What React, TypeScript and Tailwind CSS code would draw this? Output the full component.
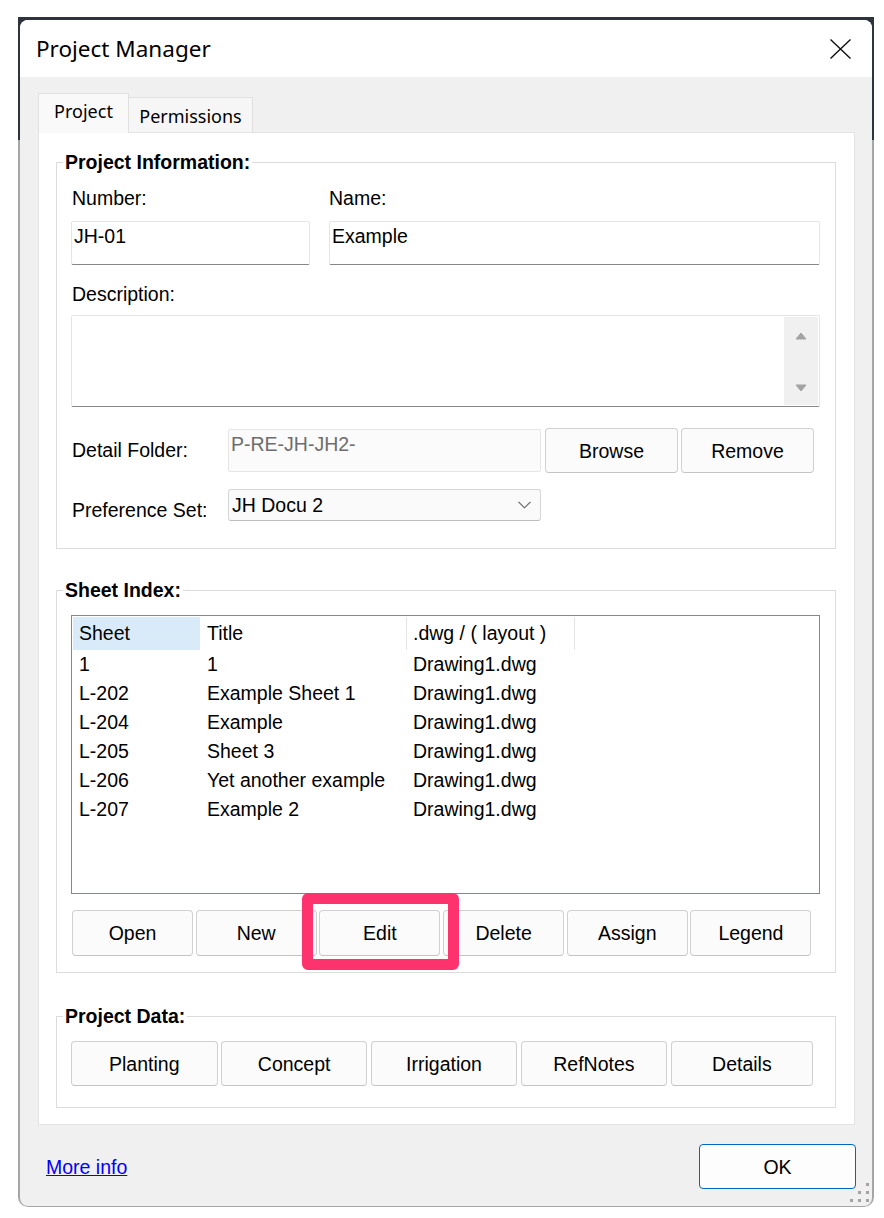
const sheets = [
  ["1", "1", "Drawing1.dwg"],
  ["L-202", "Example Sheet 1", "Drawing1.dwg"],
  ["L-204", "Example", "Drawing1.dwg"],
  ["L-205", "Sheet 3", "Drawing1.dwg"],
  ["L-206", "Yet another example", "Drawing1.dwg"],
  ["L-207", "Example 2", "Drawing1.dwg"],
];

const sheetButtons = ["Open", "New", "Edit", "Delete", "Assign", "Legend"];
const dataButtons = ["Planting", "Concept", "Irrigation", "RefNotes", "Details"];

function Group({
  title,
  className,
  children,
}: {
  title: string;
  className: string;
  children: React.ReactNode;
}) {
  return (
    <fieldset className={`border border-[#dcdcdc] pl-[6px] pr-[8px] ${className}`}>
      <legend className="px-[2px] text-[19.5px] leading-[22px] font-bold text-black">{title}</legend>
      <div className="pl-[8px] pr-[7px]">{children}</div>
    </fieldset>
  );
}

function Button({ label, className }: { label: string; className: string }) {
  return (
    <button
      className={`flex items-center justify-center rounded-[4px] border border-[#d0d0d0] border-b-[#c4c4c4] bg-[#fbfbfb] text-[19.5px] leading-[22px] text-black ${className}`}
    >
      {label}
    </button>
  );
}

export default function App() {
  return (
    <div className="h-[1218px] w-[884px] overflow-hidden bg-white font-['Liberation_Sans',Arial,sans-serif] text-black">
      {/* dark desktop behind the top of the window, grey frame below */}
      <div className="ml-[18px] mt-[17px] w-[856px] rounded-b-[10px] bg-[linear-gradient(to_bottom,#2f343c_0px,#2f343c_123px,#a6a6a6_123px)] px-[2px] pb-px pt-[3px]">
        <div className="relative overflow-hidden rounded-[8px] bg-[#f0f0f0]">
          {/* ── Title bar ── */}
          <div className="flex h-[57px] items-center justify-between bg-white pl-[16px] pr-[21px]">
            <span className="font-['Noto_Sans',sans-serif] text-[22.5px] leading-[30px]">Project Manager</span>
            <svg width="21" height="20" viewBox="0 0 21 20" fill="none" stroke="#111" strokeWidth="1.4">
              <path d="M0.5 0.5L20.5 19.5M20.5 0.5L0.5 19.5" />
            </svg>
          </div>

          {/* ── Tabs + panel ── */}
          <div className="pl-[18px] pr-[17px] pt-[16px]">
            <div className="flex h-[39px] items-end font-['Noto_Sans',sans-serif] text-[18px] leading-[24px]">
              <div className="relative z-10 -mb-px h-[40px] w-[91px] border border-b-0 border-[#e0e0e0] bg-[#f9f9f9] pt-[5px] text-center">
                Project
              </div>
              <div className="h-[35px] w-[124px] border border-b-0 border-l-0 border-[#e0e0e0] bg-[#f6f6f6] pt-[6px] text-center">
                Permissions
              </div>
            </div>

            <div className="border border-[#e3e3e3] bg-white pb-[16px] pl-[17px] pr-[18px] pt-[18px]">
              {/* Project Information */}
              <Group title="Project Information:" className="pb-[27px] pt-[14px]">
                <div className="flex gap-[19px] text-[19.5px] leading-[22px]">
                  <div className="w-[239px]">
                    <div className="pl-px">Number:</div>
                    <div className="mt-[12px] h-[44px] rounded-[2px] border border-[#e5e5e5] border-b-[#868686] bg-white pl-[2px] pt-[3px]">
                      JH-01
                    </div>
                  </div>
                  <div className="flex-1">
                    <div>Name:</div>
                    <div className="mt-[12px] h-[44px] rounded-[2px] border border-[#e5e5e5] border-b-[#868686] bg-white pl-[2px] pt-[3px]">
                      Example
                    </div>
                  </div>
                </div>

                <div className="mt-[18px] pl-px text-[19.5px] leading-[22px]">Description:</div>
                <div className="mt-[10px] flex h-[92px] rounded-[2px] border border-[#e5e5e5] border-b-[#868686] bg-white">
                  <div className="flex-1" />
                  <div className="my-px mr-px flex w-[34px] flex-col items-center justify-between bg-[#f0f0f0] pb-[13px] pt-[15px]">
                    <svg width="12" height="8" viewBox="0 0 12 8">
                      <path d="M6 1L11 7H1Z" fill="#a3a3a3" stroke="#a3a3a3" strokeLinejoin="round" />
                    </svg>
                    <svg width="12" height="8" viewBox="0 0 12 8">
                      <path d="M6 7L11 1H1Z" fill="#a3a3a3" stroke="#a3a3a3" strokeLinejoin="round" />
                    </svg>
                  </div>
                </div>

                <div className="mt-[21px] flex items-start text-[19.5px] leading-[22px]">
                  <div className="mt-[11px] w-[157px] pl-px">Detail Folder:</div>
                  <div className="mt-px h-[43px] w-[313px] rounded-[2px] border border-[#e5e5e5] bg-[#fbfbfb] pl-[2px] pt-[3px] text-[#6d6d6d]">
                    P-RE-JH-JH2-
                  </div>
                  <Button label="Browse" className="ml-[4px] h-[45px] w-[133px]" />
                  <Button label="Remove" className="ml-[3px] h-[45px] w-[133px]" />
                </div>

                <div className="mt-[16px] flex items-start text-[19.5px] leading-[22px]">
                  <div className="mt-[10px] w-[157px] pl-px">Preference Set:</div>
                  <div className="flex h-[32px] w-[313px] items-center justify-between rounded-[3px] border border-[#d6d6d6] border-b-[#bdbdbd] bg-[#fafafa] pl-[3px] pr-[9px]">
                    <span>JH Docu 2</span>
                    <svg width="13" height="8" viewBox="0 0 13 8" fill="none" stroke="#5f5f5f" strokeWidth="1.1">
                      <path d="M0.5 0.8L6.5 6.8L12.5 0.8" />
                    </svg>
                  </div>
                </div>
              </Group>

              {/* Sheet Index */}
              <Group title="Sheet Index:" className="mt-[30px] pb-[16px] pt-[14px]">
                <div className="h-[279px] border border-[#828790] bg-white p-px text-[19.5px]">
                  <div className="flex h-[33px] leading-[33px]">
                    <div className="w-[127px] bg-[#d9ebf9] pl-[6px]">Sheet</div>
                    <div className="w-[207px] border-r border-[#e5e5e5] pl-[7px]">Title</div>
                    <div className="w-[168px] border-r border-[#e5e5e5] pl-[6px]">.dwg / ( layout )</div>
                  </div>
                  {sheets.map((r) => (
                    <div key={r[0]} className="flex h-[29px] leading-[29px]">
                      <div className="w-[127px] pl-[6px]">{r[0]}</div>
                      <div className="w-[207px] pl-[7px]">{r[1]}</div>
                      <div className="w-[168px] pl-[6px]">{r[2]}</div>
                    </div>
                  ))}
                </div>

                <div className="mt-[16px] flex gap-[2.7px] pl-px">
                  {sheetButtons.map((b) =>
                    b === "Edit" ? (
                      <div key={b} className="relative">
                        <Button label={b} className="h-[46px] w-[121px]" />
                        {/* highlight annotation */}
                        <div className="pointer-events-none absolute -left-[17px] -top-[17px] h-[77px] w-[157px] rounded-[6px] border-[11px] border-[#fe336e]" />
                      </div>
                    ) : (
                      <Button key={b} label={b} className="h-[46px] w-[121px]" />
                    )
                  )}
                </div>
              </Group>

              {/* Project Data */}
              <Group title="Project Data:" className="mt-[32px] pb-[21px] pt-[14px]">
                <div className="flex gap-[3.4px]">
                  {dataButtons.map((b) => (
                    <Button
                      key={b}
                      label={b}
                      className={b === "Details" ? "h-[45px] w-[142.6px]" : "h-[45px] w-[146.5px]"}
                    />
                  ))}
                </div>
              </Group>
            </div>
          </div>

          {/* ── Footer ── */}
          <div className="mt-[19px] flex items-center justify-between pb-[17px] pl-[26px] pr-[16px]">
            <a href="#" className="text-[19.5px] leading-[22px] text-[#0000ff] underline">
              More info
            </a>
            <button className="h-[45px] w-[157px] rounded-[4px] border border-[#0067c0] bg-[#fdfdfd] text-[19.5px] leading-[22px]">
              OK
            </button>
          </div>

          {/* resize grip */}
          <svg className="absolute bottom-[4px] right-[3px]" width="19" height="19" viewBox="0 0 19 19" fill="#a3a3a3">
            <rect x="16" y="0" width="3" height="3" />
            <rect x="8" y="8" width="3" height="3" />
            <rect x="16" y="8" width="3" height="3" />
            <rect x="0" y="16" width="3" height="3" />
            <rect x="8" y="16" width="3" height="3" />
            <rect x="16" y="16" width="3" height="3" />
          </svg>
        </div>
      </div>
    </div>
  );
}
